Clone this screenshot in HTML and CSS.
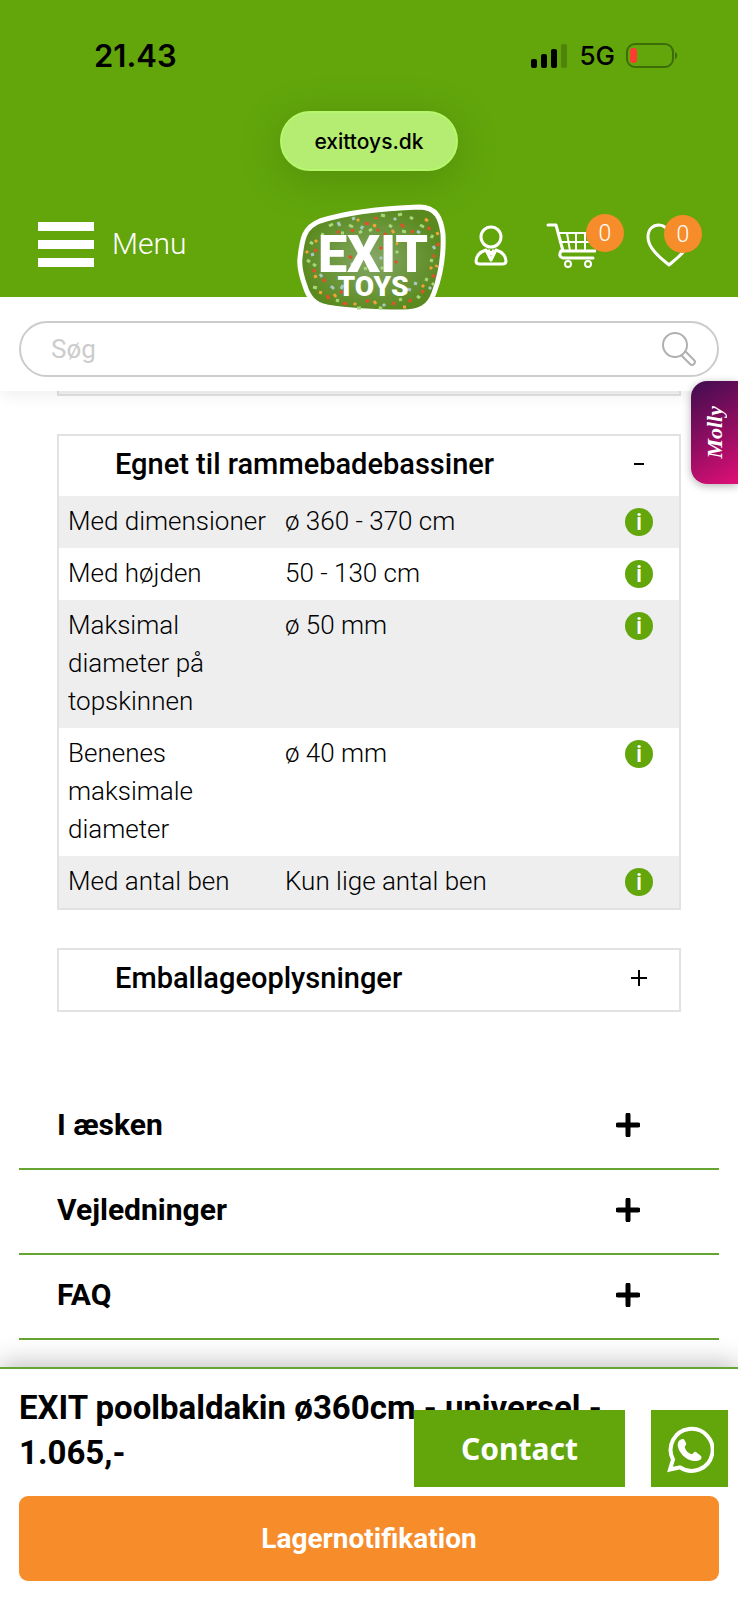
FILE: index.html
```html
<!DOCTYPE html>
<html lang="da">
<head>
    <meta charset="UTF-8">
    <meta name="viewport" content="width=device-width, initial-scale=1.0">
    <title>EXIT poolbaldakin ø360cm - universel</title>
    <link rel="stylesheet" href="styles.css">
</head>
<body>
    <header class="site-header">
        <div class="status-bar">
            <span class="status-time">21.43</span>
            <div class="status-icons">
                <svg width="38" height="24" viewBox="0 0 38 24">
                    <rect x="1" y="15" width="6" height="9" rx="2"/>
                    <rect x="11" y="10" width="6" height="14" rx="2"/>
                    <rect x="21" y="5" width="6" height="19" rx="2"/>
                    <rect x="31" y="0" width="6" height="24" rx="2" opacity="0.2"/>
                </svg>
                <span class="status-network">5G</span>
                <svg width="52" height="26" viewBox="0 0 52 26">
                    <rect x="1" y="1" width="46" height="23" rx="8" fill="none" stroke="#3c6d08" stroke-width="2"/>
                    <rect x="4" y="5" width="7" height="15" rx="3" fill="#fd3b31"/>
                    <path d="M49 9c3 1 3 6 0 7z" fill="#3c6d08"/>
                </svg>
            </div>
        </div>

        <div class="address-pill">exittoys.dk</div>

        <nav class="nav-bar">
            <button class="menu-button">
                <span class="menu-bars"><i></i><i></i><i></i></span>
                <span class="menu-label">Menu</span>
            </button>

            <a href="#" class="logo">
                <svg width="156" height="112" viewBox="0 0 156 112">
                    <defs>
                        <radialGradient id="logoFill">
                            <stop offset="0" stop-color="#86a868"/>
                            <stop offset="1" stop-color="#5a8a1f"/>
                        </radialGradient>
                    </defs>
                    <path d="M9 55C11 36 13 24 29 18C60 8 100 5 128 4C146 4 150 16 152 31C153 52 150 71 143 90C138 104 129 109 112 109C85 109 60 108 36 104C22 101 17 93 14 83C10 72 8 63 9 55Z" fill="url(#logoFill)" stroke="#fff" stroke-width="5"/>
                    <g fill="none" stroke-width="3">
                        <path stroke="#e5502b" d="M74 20l4 1M110 21l3 3M60 27l3 1M95 30l-2 3M137 24l2 3M23 47l3 1M141 72l3 2M22 66l2 3M36 92l2 4M52 100l4 1M75 99l3-2M101 100l3 1M118 99l2-3M46 28l2 2M148 40l-2 3M32 76l2 3M130 88l3 1M84 14l2 2M120 28l3 1M49 88l3 2M86 26l2 2M142 52l2 2M58 53l3 2M89 44l2 2M104 60l2-2M122 54l2 2"/>
                        <path stroke="#a8d77b" d="M38 23l4-2M58 22l4 2M90 12l4 1M107 12l4-1M119 14l3 2M129 22l4 2M142 32l-2 3M111 28l4 1M68 30l3-2M19 39l3 2M16 57l3 2M22 61l3 2M139 57l3 1M134 76l3 1M126 93l3 2M141 80l2 2M22 84l4 1M45 97l3 1M66 105l4 0M88 104l3 2M108 97l3-1M30 31l3 1M98 22l3 2M78 28l3-2M50 30l3 0M90 64l2 2M105 48l2 2M121 62l2 2M73 66l3-1"/>
                        <path stroke="#a7c8c6" d="M47 19l2 4M61 16l3-1M103 15l2 2M126 28l3 2M20 52l3-1M29 71l2 3M52 82l-2 4M142 43l2 3M116 86l4 1M92 101l2 2M138 86l2-2M40 83l3 3M72 23l-2 3M123 80l3 1M89 54l2 2M60 62l2-2"/>
                        <path stroke="#f3a33a" d="M66 18l2-2M82 22l3 1M134 16l3 2M146 29l1 3M15 48l2 2M26 37l-2 2M23 74l3-1M28 89l3 1M43 91l2 3M63 100l2 2M83 98l2 3M112 104l3 0M139 64l2 2M146 62l-1 2M131 82l2 2M101 27l2 3M105 40l2 1M122 46l2 2"/>
                    </g>
                    <text class="logo-name" x="82" y="69">EXIT</text>
                    <text class="logo-sub" x="82" y="93">TOYS</text>
                </svg>
            </a>

            <div class="nav-actions">
                <a href="#" class="nav-icon" aria-label="Konto">
                    <svg width="34" height="44" viewBox="0 0 34 44" fill="none" stroke="#fff" stroke-width="3" stroke-linejoin="round">
                        <circle cx="17" cy="14" r="10"/>
                        <path d="M12 27C5 29 2 34 2 38Q2 41 6 41H28Q32 41 32 38C32 34 29 29 22 27L17 37Z"/>
                        <path d="M14 27L17 31L20 27"/>
                    </svg>
                </a>
                <a href="#" class="nav-icon cart" aria-label="Kurv">
                    <svg width="50" height="46" viewBox="0 0 50 46" fill="none" stroke="#fff" stroke-width="2" stroke-linecap="round" stroke-linejoin="round">
                        <path d="M2 3H10L17 29H49M15 29Q12 35 17 36H47" stroke-width="3"/>
                        <path d="M12 11H46M14 20H46M21 11L24 29M30 11V29M39 11V29"/>
                        <circle cx="22" cy="42" r="3"/>
                        <circle cx="42" cy="42" r="3"/>
                    </svg>
                    <span class="badge">0</span>
                </a>
                <a href="#" class="nav-icon wishlist" aria-label="Favoritter">
                    <svg width="46" height="44" viewBox="0 0 46 44" fill="none" stroke="#fff" stroke-width="3" stroke-linejoin="round">
                        <path d="M23 42C16 36 2 26 2 14C2 6 7 2 13 2C18 2 22 6 23 10C24 6 28 2 33 2C39 2 44 6 44 14C44 26 30 36 23 42Z"/>
                    </svg>
                    <span class="badge">0</span>
                </a>
            </div>
        </nav>
    </header>

    <form class="search-strip">
        <div class="search-box">
            <input type="search" placeholder="Søg" aria-label="Søg">
            <button type="button" class="search-button" aria-label="Søg">
                <svg width="36" height="36" viewBox="0 0 36 36" fill="none" stroke="#b0b0b0" stroke-width="2">
                    <circle cx="14" cy="14" r="12"/>
                    <path d="M20 24L29 33Q31 35 33 33Q35 31 33 29L24 20"/>
                </svg>
            </button>
        </div>
    </form>

    <a href="#" class="molly-tab"><span>Molly</span></a>

    <main class="content">
        <div class="spec-card-end"></div>

        <section class="spec-card">
            <button class="spec-header">
                <span>Egnet til rammebadebassiner</span>
                <svg width="18" height="18" viewBox="0 0 18 18"><path d="M4 9H14" stroke="#000" stroke-width="2"/></svg>
            </button>
            <table class="spec-table">
                <tr>
                    <th>Med dimensioner</th>
                    <td>ø 360 - 370 cm</td>
                    <td class="info-cell"><button class="info" aria-label="Info"></button></td>
                </tr>
                <tr>
                    <th>Med højden</th>
                    <td>50 - 130 cm</td>
                    <td class="info-cell"><button class="info" aria-label="Info"></button></td>
                </tr>
                <tr>
                    <th>Maksimal diameter på topskinnen</th>
                    <td>ø 50 mm</td>
                    <td class="info-cell"><button class="info" aria-label="Info"></button></td>
                </tr>
                <tr>
                    <th>Benenes maksimale diameter</th>
                    <td>ø 40 mm</td>
                    <td class="info-cell"><button class="info" aria-label="Info"></button></td>
                </tr>
                <tr>
                    <th>Med antal ben</th>
                    <td>Kun lige antal ben</td>
                    <td class="info-cell"><button class="info" aria-label="Info"></button></td>
                </tr>
            </table>
        </section>

        <section class="spec-card">
            <button class="spec-header">
                <span>Emballageoplysninger</span>
                <svg width="18" height="18" viewBox="0 0 18 18"><path d="M1 9H17M9 1V17" stroke="#000" stroke-width="2"/></svg>
            </button>
        </section>

        <div class="accordion">
            <button class="accordion-item">
                <span>I æsken</span>
                <svg width="24" height="24" viewBox="0 0 24 24"><path d="M2 12H22M12 2V22" stroke="#000" stroke-width="5" stroke-linecap="round"/></svg>
            </button>
            <button class="accordion-item">
                <span>Vejledninger</span>
                <svg width="24" height="24" viewBox="0 0 24 24"><path d="M2 12H22M12 2V22" stroke="#000" stroke-width="5" stroke-linecap="round"/></svg>
            </button>
            <button class="accordion-item">
                <span>FAQ</span>
                <svg width="24" height="24" viewBox="0 0 24 24"><path d="M2 12H22M12 2V22" stroke="#000" stroke-width="5" stroke-linecap="round"/></svg>
            </button>
        </div>
    </main>

    <footer class="buy-bar">
        <div class="buy-title">EXIT poolbaldakin ø360cm - universel -</div>
        <div class="buy-title">1.065,-</div>
        <button class="buy-button">Lagernotifikation</button>

        <div class="contact-widget">
            <button class="contact-button">Contact</button>
            <a href="#" class="whatsapp-button" aria-label="WhatsApp">
                <svg width="48" height="48" viewBox="0 0 48 48">
                    <path d="M4 44.500L7 34.500A21 21 0 1 1 14 42.300Z" fill="none" stroke="#fff" stroke-width="4"/>
                    <path d="M17 14C13 14 11 18 12 22C14 30 22 36 29 36C33 36 37 34 35 31C33 29 31 28 30 27C28 26 27 30 25 29C22 28 20 26 19 23C18 21 21 20 20 18C19 16 18 14 17 14Z" fill="#fff"/>
                </svg>
            </a>
        </div>
    </footer>
</body>
</html>
```
FILE: styles.css
```css
* {
    margin: 0;
    padding: 0;
    box-sizing: border-box;
}

body {
    display: flex;
    flex-direction: column;
    min-height: 100vh;
    position: relative;
    font-family: Roboto, sans-serif;
    font-size: 26px;
    font-weight: 300;
    color: #000;
    background: #fff;
}

button {
    border: none;
    background: none;
    font: inherit;
    color: inherit;
    cursor: pointer;
}

a {
    color: inherit;
    text-decoration: none;
}

svg {
    display: block;
}

/* Header */
.site-header {
    background: #62a60c;
    position: relative;
    z-index: 3;
}

.status-bar {
    display: flex;
    justify-content: space-between;
    align-items: center;
    height: 111px;
    padding: 0 60px 0 94px;
    font-family: Inter, sans-serif;
    font-weight: 600;
}

.status-time {
    font-size: 31px;
}

.status-icons {
    display: flex;
    align-items: center;
    gap: 11px;
}

.status-network {
    font-size: 26px;
    font-weight: 500;
}

.address-pill {
    display: flex;
    align-items: center;
    justify-content: center;
    width: 178px;
    height: 60px;
    margin: 0 auto;
    border: 2px solid #b7f76d;
    border-radius: 30px;
    background: #b4ed72;
    box-shadow: 0 8px 40px rgba(50, 90, 10, 0.3);
    font-family: Inter, sans-serif;
    font-size: 21px;
    font-weight: 500;
}

.nav-bar {
    display: flex;
    justify-content: space-between;
    align-items: center;
    height: 126px;
    padding: 22px 46px 0 38px;
    position: relative;
    color: #fff;
}

.menu-button {
    display: flex;
    align-items: center;
    gap: 18px;
    font-size: 30px;
}

.menu-label {
    padding-bottom: 4px;
}

.menu-bars {
    display: flex;
    flex-direction: column;
    gap: 9px;
    padding-bottom: 2px;
}

.menu-bars i {
    width: 56px;
    height: 9px;
    background: #fff;
}

.logo {
    position: absolute;
    top: 32px;
    left: 50%;
    transform: translateX(-50%);
}

.logo-name,
.logo-sub {
    fill: #fff;
    font-weight: 900;
    text-anchor: middle;
}

.logo-name {
    font-size: 52px;
}

.logo-sub {
    font-size: 28px;
}

.nav-actions {
    display: flex;
    align-items: center;
    gap: 38px;
}

.nav-icon {
    position: relative;
}

.wishlist {
    margin-left: 12px;
}

.badge {
    display: flex;
    align-items: center;
    justify-content: center;
    width: 38px;
    height: 38px;
    position: absolute;
    top: -8px;
    right: -28px;
    border-radius: 50%;
    background: #f78c2a;
    font-size: 23px;
}

.wishlist .badge {
    right: -10px;
}

/* Search */
.search-strip {
    padding: 24px 19px 14px;
    position: relative;
    z-index: 2;
    background: #fff;
    box-shadow: 0 4px 16px rgba(0, 0, 0, 0.07);
}

.search-box {
    display: flex;
    align-items: center;
    height: 56px;
    padding: 0 20px 0 30px;
    border: 2px solid #ccc;
    border-radius: 28px;
}

.search-box input {
    flex: 1;
    min-width: 0;
    border: none;
    outline: none;
    background: none;
    font: inherit;
    font-weight: 400;
}

.search-box input::placeholder {
    color: #ccc;
}

.molly-tab {
    display: flex;
    align-items: center;
    justify-content: center;
    width: 47px;
    height: 103px;
    position: absolute;
    top: 381px;
    right: 0;
    z-index: 4;
    border-radius: 16px 0 0 16px;
    background: linear-gradient(150deg, #3f0d4f, #8c0d60 50%, #e00f76);
    box-shadow: 0 2px 8px rgba(0, 0, 0, 0.3);
    color: #fff;
    font-family: "Liberation Serif", serif;
    font-size: 22px;
    font-style: italic;
    font-weight: bold;
}

.molly-tab span {
    writing-mode: vertical-rl;
    transform: rotate(180deg);
}

/* Specifications */
.content {
    flex: 1;
    padding: 0 19px;
}

.spec-card-end {
    height: 5px;
    margin: 0 38px;
    border: 2px solid #e2e2e2;
    border-top: none;
    background: #f4f4f4;
}

.spec-card {
    margin: 38px 38px 0;
    border: 2px solid #e2e2e2;
}

.spec-header {
    display: flex;
    justify-content: space-between;
    align-items: center;
    width: 100%;
    height: 60px;
    padding: 0 31px 4px 56px;
    font-size: 29px;
    font-weight: 500;
}

.spec-table {
    width: 100%;
    border-collapse: collapse;
    table-layout: fixed;
    line-height: 38px;
}

.spec-table tr:nth-child(odd) {
    background: #eee;
}

.spec-table th,
.spec-table td {
    padding: 6px 9px 8px;
    text-align: left;
    vertical-align: top;
    font-weight: 300;
}

.spec-table th {
    width: 35%;
}

.spec-table .info-cell {
    width: 82px;
    padding: 12px 26px 12px 28px;
}

.info {
    display: flex;
    align-items: center;
    justify-content: center;
    width: 28px;
    height: 28px;
    border-radius: 50%;
    background: #62a60c;
}

.info::before {
    content: "i";
    color: #fff;
    font-size: 24px;
    font-weight: 500;
    line-height: 28px;
}

/* Accordion */
.accordion {
    margin-top: 73px;
}

.accordion-item {
    display: flex;
    justify-content: space-between;
    align-items: center;
    width: 100%;
    height: 85px;
    padding: 0 79px 4px 38px;
    border-bottom: 2px solid #65a532;
    font-size: 30px;
    font-weight: 700;
}

/* Bottom bar */
.buy-bar {
    padding: 16px 19px 19px;
    position: relative;
    border-top: 2px solid #65a532;
    background: #fff;
    box-shadow: 0 -4px 24px rgba(0, 0, 0, 0.25);
}

.buy-title {
    font-size: 33px;
    font-weight: 700;
    line-height: 45px;
    white-space: nowrap;
}

.buy-button {
    width: 100%;
    height: 85px;
    margin-top: 21px;
    border-radius: 9px;
    background: #f78c2a;
    color: #fff;
    font-size: 28px;
    font-weight: 700;
}

.contact-widget {
    display: flex;
    gap: 26px;
    position: absolute;
    top: 41px;
    right: 10px;
}

.contact-button {
    width: 211px;
    height: 77px;
    background: #62a60c;
    color: #fff;
    font-family: "Noto Sans", sans-serif;
    font-size: 30px;
    font-weight: 700;
}

.whatsapp-button {
    display: flex;
    align-items: center;
    justify-content: center;
    width: 77px;
    height: 77px;
    background: #62a60c;
}
```
